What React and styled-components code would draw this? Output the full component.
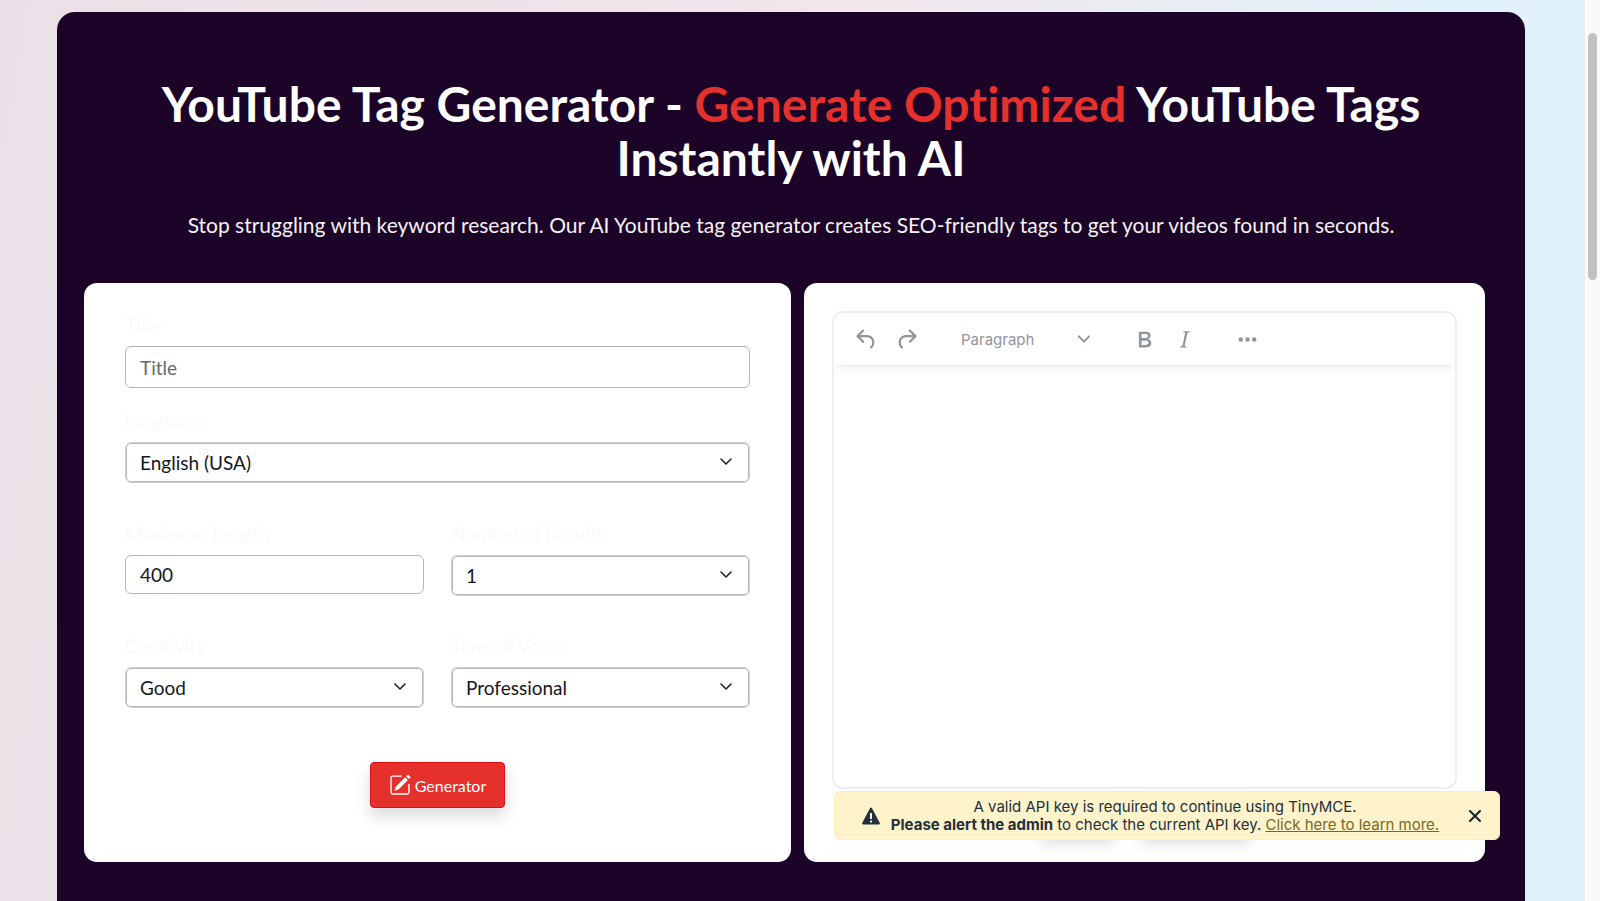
import React from "react";
import styled, { createGlobalStyle } from "styled-components";
import { BsPencilSquare } from "react-icons/bs";

const GlobalStyle = createGlobalStyle`
  * {
    box-sizing: border-box;
  }

  body {
    margin: 0;
    font-family: Lato, "Open Sans", sans-serif;
    font-size: 19px;
    font-variant-ligatures: none;
    color: #14161c;
  }

  button,
  input,
  select {
    font: inherit;
    color: inherit;
  }
`;

const Window = styled.div`
  display: flex;
  height: 100vh;
  overflow: hidden;
`;

const Page = styled.main`
  flex: 1;
  display: flex;
  padding: 12px 59px 0 57px;
  background: linear-gradient(100deg, #eddfe7 0%, #f0e6ec 50%, #e3f1fa 82%, #e0f2fb 100%);
`;

const ScrollTrack = styled.div`
  flex: 0 0 16px;
  padding: 33px 3px 0 3px;
  background: #fafafa;
  border-left: 1px solid #ececec;
`;

const ScrollThumb = styled.div`
  height: 247px;
  border-radius: 5px;
  background: #c1c1c1;
`;

const Panel = styled.section`
  flex: 1;
  padding: 65px 40px 39px 27px;
  background: #1b0427;
  border-radius: 18px 18px 0 0;
`;

const Heading = styled.h1`
  margin: 0 0 0 13px;
  color: #fff;
  font-size: 48px;
  font-weight: 700;
  line-height: 54px;
  text-align: center;
`;

const Accent = styled.span`
  color: #e5302c;
`;

const Lead = styled.p`
  margin: 16px 0 0 13px;
  color: #f4f2f5;
  font-size: 21px;
  line-height: 48px;
  text-align: center;
`;

const Columns = styled.div`
  display: grid;
  grid-template-columns: 707fr 681fr;
  gap: 13px;
  margin-top: 34px;
`;

const Card = styled.div`
  min-width: 0;
  padding: ${(props) => props.$padding};
  background: #fff;
  border-radius: 13px;
`;

const Form = styled.form`
  display: grid;
  grid-template-columns: 1fr 1fr;
  column-gap: 27px;
`;

const Field = styled.div`
  grid-column: ${(props) => (props.$wide ? "1 / -1" : "auto")};
  height: ${(props) => props.$height};
`;

const Label = styled.label`
  display: block;
  margin-bottom: 7px;
  color: #f9fafa;
  line-height: 28px;
`;

const Input = styled.input`
  display: block;
  width: 100%;
  height: ${(props) => props.$height};
  padding: 0 14px;
  background: #fff;
  border: 1px solid #b4b6b7;
  border-radius: 6px;
  outline: none;

  &::placeholder {
    color: #63696c;
    opacity: 1;
  }
`;

const SelectBox = styled.div`
  position: relative;
`;

const SelectControl = styled.select`
  display: block;
  width: 100%;
  height: 41px;
  padding: 0 40px 0 14px;
  appearance: none;
  background: #fff;
  border: 1px solid #cfd2d3;
  border-radius: 6px;
  box-shadow: inset 0 0 0 1px #b5b7b8;
`;

const SelectArrow = styled.svg`
  position: absolute;
  top: 12px;
  right: 16px;
  width: 16px;
  height: 16px;
  pointer-events: none;
`;

const Actions = styled.div`
  grid-column: 1 / -1;
  display: flex;
  justify-content: center;
  padding-top: 8px;
`;

const GenerateButton = styled.button`
  display: flex;
  align-items: center;
  gap: 4px;
  height: 46px;
  padding: 0 18px;
  color: #fff;
  font-size: 16px;
  background: #e5302c;
  border: 1px solid #d90f10;
  border-radius: 4px;
  box-shadow: 0 8px 16px rgba(0, 0, 0, 0.15);

  svg {
    width: 22px;
    height: 22px;
  }
`;

const EditorArea = styled.div`
  position: relative;
  font-family: Inter, sans-serif;
`;

const Editor = styled.div`
  height: 478px;
  background: #fff;
  border: 2px solid #eee;
  border-radius: 11px;
  overflow: hidden;
`;

const Toolbar = styled.div`
  display: flex;
  align-items: center;
  gap: 24px;
  height: 52px;
  padding: 0 13px;
  color: #8f949d;
  box-shadow: 0 2px 2px -2px rgba(34, 47, 62, 0.1), 0 8px 8px -4px rgba(34, 47, 62, 0.07);
`;

const ToolGroup = styled.div`
  display: flex;
  gap: 1px;
`;

const ToolButton = styled.button`
  display: flex;
  align-items: center;
  justify-content: center;
  width: 39px;
  height: 32px;
  padding: 0;
  background: none;
  border: 0;

  svg {
    width: 27px;
    height: 27px;
    fill: currentColor;
  }
`;

const BlockButton = styled.button`
  display: flex;
  align-items: center;
  justify-content: space-between;
  width: 151px;
  height: 32px;
  padding: 0 11px;
  font-size: 15px;
  background: none;
  border: 0;

  svg {
    width: 12px;
    height: 12px;
    fill: currentColor;
  }
`;

const Notice = styled.div`
  position: absolute;
  top: 480px;
  left: 2px;
  right: -43px;
  display: flex;
  align-items: center;
  height: 49px;
  padding: 0 14px 0 26px;
  color: #222f3e;
  font-size: 15px;
  line-height: 18px;
  background: #fff3cb;
  border: 1px solid #ffeeb4;
  border-radius: 6px;
`;

const NoticeText = styled.p`
  flex: 1;
  margin: 0;
  text-align: center;
  white-space: nowrap;
`;

const NoticeLink = styled.a`
  color: #77681f;
  text-decoration: underline;
`;

const WarningIcon = styled.svg`
  flex: none;
  width: 20px;
  height: 20px;
`;

const CloseButton = styled.button`
  display: flex;
  margin-left: 16px;
  padding: 3px;
  background: none;
  border: 0;

  svg {
    width: 14px;
    height: 14px;
  }
`;

const ButtonShadows = styled.div`
  display: flex;
  justify-content: center;
  gap: 28px;
  padding-top: 6px;
`;

const ButtonShadow = styled.div`
  width: ${(props) => props.$width};
  height: 40px;
  border-radius: 4px;
  box-shadow: 0 8px 16px rgba(0, 0, 0, 0.15);
`;

const icons = {
  undo: "M6.4 8H12c3.7 0 6.2 2 6.8 5.1.6 2.7-.4 5.6-2.3 6.8a1 1 0 0 1-1-1.8c1.1-.6 1.8-2.7 1.4-4.6-.5-2.1-2.1-3.5-4.9-3.5H6.4l3.3 3.3a1 1 0 1 1-1.4 1.4l-5-5a1 1 0 0 1 0-1.4l5-5a1 1 0 0 1 1.4 1.4L6.4 8Z",
  redo: "M17.6 10H12c-2.8 0-4.4 1.4-4.9 3.5-.4 2 .3 4 1.4 4.6a1 1 0 1 1-1 1.8c-2-1.2-2.9-4.1-2.3-6.8.6-3 3-5.1 6.8-5.1h5.6l-3.3-3.3a1 1 0 1 1 1.4-1.4l5 5a1 1 0 0 1 0 1.4l-5 5a1 1 0 0 1-1.4-1.4l3.3-3.3Z",
  bold: "M7.8 19c-.3 0-.5 0-.6-.2l-.2-.5V5.7c0-.2 0-.4.2-.5l.6-.2h5c1.5 0 2.7.3 3.5 1 .7.6 1.1 1.4 1.1 2.5a3 3 0 0 1-.6 1.9c-.4.6-1 1-1.6 1.2.4.1.9.3 1.3.6s.8.7 1 1.2c.4.4.5 1 .5 1.6 0 1.3-.4 2.3-1.3 3-.8.7-2.1 1-3.8 1H7.8Zm5-8.3c.6 0 1.2-.1 1.6-.5.4-.3.6-.7.6-1.3 0-1.1-.8-1.7-2.3-1.7H9.3v3.5h3.4Zm.5 6c.7 0 1.3-.1 1.7-.4.4-.4.6-.9.6-1.5s-.2-1-.7-1.4c-.4-.3-1-.4-2-.4H9.4v3.8h4Z",
  italic: "m16.7 4.7-.1.9h-.3c-.6 0-1 0-1.4.3-.3.3-.4.6-.5 1.1l-2.1 9.8v.6c0 .5.4.8 1.4.8h.2l-.2.8H8l.2-.8h.2c1.1 0 1.8-.5 2-1.5l2-9.8.1-.5c0-.6-.4-.8-1.4-.8h-.3l.2-.9h5.8Z",
  more: "M6 10a2 2 0 1 0 0 4 2 2 0 0 0 0-4Zm12 0a2 2 0 1 0 0 4 2 2 0 0 0 0-4Zm-6 0a2 2 0 1 0 0 4 2 2 0 0 0 0-4Z",
};

const Tool = ({ icon, label }) => (
  <ToolButton type="button" aria-label={label}>
    <svg viewBox="0 0 24 24">
      <path d={icons[icon]} />
    </svg>
  </ToolButton>
);

const SelectField = ({ id, label, options, wide, height }) => (
  <Field $wide={wide} $height={height}>
    <Label htmlFor={id}>{label}</Label>
    <SelectBox>
      <SelectControl id={id}>
        {options.map((option) => (
          <option key={option}>{option}</option>
        ))}
      </SelectControl>
      <SelectArrow viewBox="0 0 16 16" fill="none" stroke="#1d252b">
        <path d="m3 5 5 5 5-5" strokeWidth="1.6" strokeLinecap="round" strokeLinejoin="round" />
      </SelectArrow>
    </SelectBox>
  </Field>
);

const GeneratorForm = () => (
  <Form onSubmit={(event) => event.preventDefault()}>
    <Field $wide $height="96px">
      <Label htmlFor="title">Title</Label>
      <Input id="title" type="text" placeholder="Title" $height="42px" />
    </Field>
    <SelectField wide id="language" label="Language" options={["English (USA)"]} height="113px" />
    <Field $height="112px">
      <Label htmlFor="length">Maximum Length</Label>
      <Input id="length" type="text" defaultValue="400" $height="39px" />
    </Field>
    <SelectField id="results" label="Number of Results" options={["1"]} height="112px" />
    <SelectField id="creativity" label="Creativity" options={["Good"]} height="122px" />
    <SelectField id="tone" label="Tone of Voice" options={["Professional"]} height="122px" />
    <Actions>
      <GenerateButton type="submit">
        <BsPencilSquare />
        Generator
      </GenerateButton>
    </Actions>
  </Form>
);

const ResultEditor = () => (
  <EditorArea>
    <Editor>
      <Toolbar>
        <ToolGroup>
          <Tool icon="undo" label="Undo" />
          <Tool icon="redo" label="Redo" />
        </ToolGroup>
        <BlockButton type="button">
          Paragraph
          <svg viewBox="0 0 10 10">
            <path d="M8.7 2.2c.3-.3.8-.3 1 0 .4.4.4.9 0 1.2L5.7 7.8c-.3.3-.9.3-1.2 0L.2 3.4a.8.8 0 0 1 0-1.2c.3-.3.8-.3 1.1 0L5 6l3.7-3.8Z" />
          </svg>
        </BlockButton>
        <ToolGroup>
          <Tool icon="bold" label="Bold" />
          <Tool icon="italic" label="Italic" />
        </ToolGroup>
        <Tool icon="more" label="More" />
      </Toolbar>
    </Editor>
    <ButtonShadows aria-hidden="true">
      <ButtonShadow $width="72px" />
      <ButtonShadow $width="108px" />
    </ButtonShadows>
    <Notice role="alert">
      <WarningIcon viewBox="0 0 20 20">
        <path d="M9 2.2c.4-.8 1.6-.8 2 0l7.8 14.8c.4.7-.1 1.500-.9 1.500H2.100c-.8 0-1.300-.8-.9-1.500Z" fill="#222f3e" />
        <path d="M9 7h2v6H9zM9 14.500h2v2H9z" fill="#fff3cb" />
      </WarningIcon>
      <NoticeText>
        A valid API key is required to continue using TinyMCE.
        <br />
        <strong>Please alert the admin</strong> to check the current API key.{" "}
        <NoticeLink href="#learn-more">Click here to learn more.</NoticeLink>
      </NoticeText>
      <CloseButton type="button" aria-label="Close">
        <svg viewBox="0 0 14 14" stroke="#14202c" strokeWidth="2" strokeLinecap="round">
          <path d="m2 2 10 10M12 2 2 12" />
        </svg>
      </CloseButton>
    </Notice>
  </EditorArea>
);

const App = () => (
  <Window>
    <GlobalStyle />
    <Page>
      <Panel>
        <Heading>
          YouTube Tag Generator - <Accent>Generate Optimized</Accent> YouTube Tags Instantly with AI
        </Heading>
        <Lead>
          Stop struggling with keyword research. Our AI YouTube tag generator creates SEO-friendly tags to get your
          videos found in seconds.
        </Lead>
        <Columns>
          <Card $padding="28px 41px 54px">
            <GeneratorForm />
          </Card>
          <Card $padding="28px 28px 27px">
            <ResultEditor />
          </Card>
        </Columns>
      </Panel>
    </Page>
    <ScrollTrack>
      <ScrollThumb />
    </ScrollTrack>
  </Window>
);

export default App;
